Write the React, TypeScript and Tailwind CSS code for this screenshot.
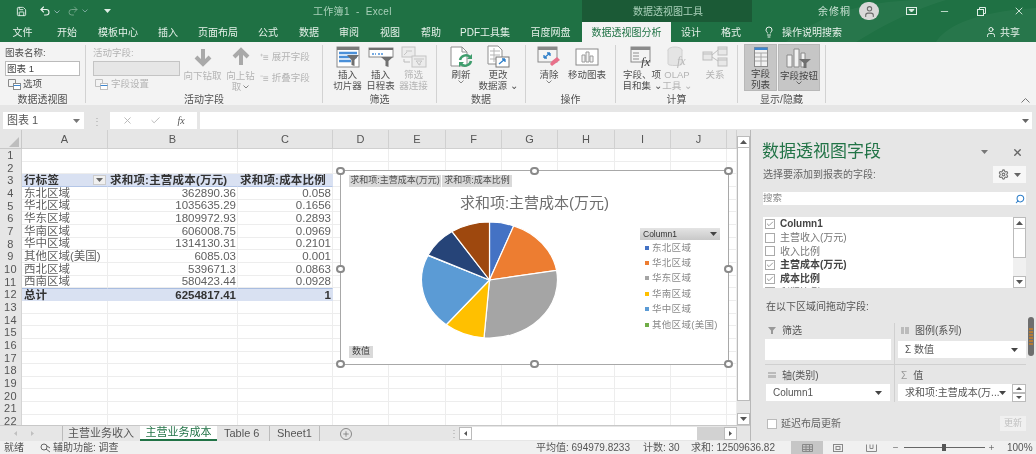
import React from "react";
import { Save, Undo2, Redo2, Lightbulb, User, X, Check, Search, Settings, Minus, Plus } from "lucide-react";

const Caret = ({ c = "#555" }: { c?: string }) => (
  <svg width="7" height="4" viewBox="0 0 7 4" className="shrink-0"><path d="M0 0h7L3.5 4z" fill={c} /></svg>
);
const Chev = ({ c = "#888" }: { c?: string }) => (
  <svg width="6" height="4" viewBox="0 0 6 4" className="shrink-0"><path d="M.5.5 3 3 5.500.5" stroke={c} fill="none" /></svg>
);

const tabs: [string, number][] = [
  ["文件", 45], ["开始", 44], ["模板中心", 58], ["插入", 42], ["页面布局", 58], ["公式", 42], ["数据", 40], ["审阅", 40], ["视图", 42], ["帮助", 40], ["PDF工具集", 68], ["百度网盘", 63],
];

const Big = ({ w, lines, icon, off, chev }: { w: string; lines: string[]; icon: React.ReactNode; off?: boolean; chev?: boolean }) => (
  <div className={`${w} flex flex-col items-center shrink-0 ${off ? "text-[#b4b4b4]" : "text-[#505050]"}`}>
    <div className="h-[24px] flex items-center justify-center">{icon}</div>
    {lines.map((l) => (
      <div key={l} className="text-[9.5px] leading-[11px] whitespace-nowrap flex items-center gap-[2px]">{l}</div>
    ))}
    {chev && <Chev />}
  </div>
);

const Group = ({ w, label, children }: { w: string; label: string; children: React.ReactNode }) => (
  <div className={`${w} shrink-0 h-[58px] mt-[3px] flex flex-col border-r border-[#d2d2d2]`}>
    <div className="flex-1 flex min-h-0">{children}</div>
    <div className="h-[9px] leading-[11px] text-[10px] text-center text-[#505050] whitespace-nowrap">{label}</div>
  </div>
);

const SlicerIcon = () => (
  <svg width="24" height="22" viewBox="0 0 24 22">
    <rect x="1" y="1" width="22" height="20" fill="#fff" stroke="#8a8a8a" />
    <rect x="1" y="1" width="22" height="3" fill="#7a7a7a" />
    <path d="M3 7h18M3 11h18M3 15h12" stroke="#4a90d9" strokeWidth="2.500" />
    <path d="M11 9h12l-4.500 5v6l-3-1v-5z" fill="#6f6f6f" />
  </svg>
);
const TimelineIcon = () => (
  <svg width="26" height="22" viewBox="0 0 26 22">
    <rect x="1" y="2" width="24" height="9" fill="#fff" stroke="#8a8a8a" />
    <rect x="1" y="2" width="24" height="2" fill="#6f6f6f" />
    <path d="M4 8h4M10 8h5" stroke="#4a90d9" strokeWidth="1.500" strokeDasharray="2 1" />
    <path d="M13 11h12l-4.500 4v6l-3-1v-5z" fill="#6f6f6f" />
  </svg>
);
const ConnIcon = () => (
  <svg width="26" height="22" viewBox="0 0 26 22" fill="none" stroke="#c4c4c4">
    <rect x="1" y="1" width="13" height="10" fill="#ececec" />
    <path d="M5 5h6M3 9l3-3" />
    <rect x="11" y="10" width="14" height="11" fill="#ececec" />
    <path d="M13 13h10M15 15h6l-2 2v2l-2-1v-1z" />
    <path d="M3 13v3h6" stroke="#bbb" />
  </svg>
);
const RefreshIcon = () => (
  <svg width="24" height="22" viewBox="0 0 24 22" fill="none">
    <path d="M2 1h11l5 5v14H2z" fill="#fff" stroke="#8f8f8f" />
    <path d="M13 1v5h5" stroke="#8f8f8f" />
    <path d="M11 14a6 6 0 0 1 10-3M22 15a6 6 0 0 1-10 3" stroke="#3f9d6d" strokeWidth="2.500" />
    <path d="M23 8v5h-5z M10 21v-5h5z" fill="#3f9d6d" />
  </svg>
);
const SourceIcon = () => (
  <svg width="24" height="24" viewBox="0 0 24 24" fill="none">
    <path d="M2 1h10l4 4v14H2z" fill="#fff" stroke="#8f8f8f" />
    <path d="M4 6h10M4 10h10M4 14h10M8 3v14" stroke="#b5b5b5" />
    <rect x="10" y="12" width="13" height="10" fill="#fff" stroke="#777" />
    <path d="M13 19l6-5M19 14h-3M19 14v3" stroke="#2f7fc9" strokeWidth="1.300" />
  </svg>
);
const ClearIcon = () => (
  <svg width="24" height="22" viewBox="0 0 24 22" fill="none">
    <rect x="1" y="1" width="19" height="15" fill="#f4f4f4" stroke="#8a8a8a" />
    <rect x="1" y="1" width="19" height="3" fill="#8a8a8a" />
    <path d="M7 12l6-5M13 7h-3M13 7v3M7 12h3M7 12V9" stroke="#2f7fc9" strokeWidth="1.300" />
    <path d="M15 15l5-4 3 3-8 6-2-2z" fill="#e8708a" />
  </svg>
);
const MoveIcon = () => (
  <svg width="24" height="20" viewBox="0 0 24 20" fill="none">
    <rect x="1" y="2" width="22" height="16" fill="#fff" stroke="#8a8a8a" />
    <path d="M7 8h3v7H7zM11 5h3v10h-3zM15 9h3v6h-3z" fill="#f4f4f4" stroke="#9a9a9a" />
  </svg>
);
const FxIcon = () => (
  <svg width="24" height="22" viewBox="0 0 24 22" fill="none">
    <rect x="1" y="1" width="19" height="15" fill="#f4f4f4" stroke="#8a8a8a" />
    <rect x="1" y="1" width="19" height="3" fill="#8a8a8a" />
    <path d="M3 7h6M3 10h6M3 13h6" stroke="#b0b0b0" strokeWidth="1.500" />
    <text x="11" y="20" fontSize="13" fontStyle="italic" fontFamily="Liberation Serif" fill="#444">fx</text>
  </svg>
);
const OlapIcon = () => (
  <svg width="20" height="22" viewBox="0 0 20 22" fill="none">
    <ellipse cx="8" cy="4" rx="7" ry="3" fill="#e4e4e4" stroke="#d0d0d0" />
    <path d="M1 4v14c0 2 14 2 14 0V4" fill="#e4e4e4" stroke="#d0d0d0" />
    <text x="10" y="19" fontSize="12" fontStyle="italic" fontFamily="Liberation Serif" fill="#b8b8b8">fx</text>
  </svg>
);
const RelIcon = () => (
  <svg width="26" height="22" viewBox="0 0 26 22" fill="none" stroke="#bdbdbd">
    <rect x="1" y="6" width="9" height="8" fill="#e8e8e8" />
    <rect x="16" y="1" width="9" height="8" fill="#e8e8e8" />
    <rect x="16" y="12" width="9" height="8" fill="#e8e8e8" />
    <path d="M10 9l6-5M10 11l6 4M1 8h9M16 3h9M16 14h9" />
  </svg>
);
const ListIcon = () => (
  <svg width="14" height="20" viewBox="0 0 14 20" fill="none">
    <rect x=".5" y=".5" width="13" height="19" fill="#f2f2f2" stroke="#8a8a8a" />
    <rect x=".5" y=".5" width="13" height="2.500" fill="#3e86cf" />
    <path d="M1 6h12M1 10h12M1 14h12M7 6v13" stroke="#a8a8a8" />
  </svg>
);
const FieldBtnIcon = () => (
  <svg width="26" height="20" viewBox="0 0 26 20" fill="none">
    <path d="M1 7h5v12H1zM8 1h5v18H8zM15 5h4v14h-4z" fill="#f2f2f2" stroke="#8a8a8a" />
    <path d="M13 11h12l-4.500 4v5h-3v-5z" fill="#6f6f6f" />
  </svg>
);

const PivotIcon = ({ off }: { off?: boolean }) => (
  <svg width="13" height="11" viewBox="0 0 13 11" fill="none" stroke={off ? "#c0c0c0" : "#8a8a8a"}>
    <path d="M.5.500h7v7h-7z" />
    <rect x="5.500" y="4.500" width="7" height="6" fill="#fff" />
    <path d="M5.500 6.500h7" stroke="#3e86cf" />
  </svg>
);

const Ribbon = () => (
  <div className="flex h-[63px] bg-[#f3f3f3] shrink-0 relative">
    <Group w="w-[86px]" label="数据透视图">
      <div className="pl-[5px] pt-[1px] flex flex-col w-full">
        <div className="h-[15px] text-[9.500px] leading-[14px] text-[#505050]">图表名称:</div>
        <div className="w-[75px] h-[15px] bg-white border border-[#bbb] text-[9.500px] leading-[13px] pl-[1px] text-[#444]">图表 1</div>
        <div className="flex items-center gap-[2px] pl-[3px] mt-[1px] h-[14px] text-[9.500px] text-[#505050]"><PivotIcon />选项</div>
      </div>
    </Group>
    <Group w="w-[237px]" label="活动字段">
      <div className="pl-[7px] pt-[1px] flex text-[#b4b4b4]">
        <div className="w-[87px] shrink-0 flex flex-col">
          <div className="h-[15px] text-[9.500px] leading-[14px]">活动字段:</div>
          <div className="h-[15px] bg-[#e6e6e6] border border-[#c4c4c4]" />
          <div className="flex items-center gap-[3px] pl-[2px] mt-[1px] h-[15px] text-[9.500px]"><PivotIcon off />字段设置</div>
        </div>
        <div className="w-[41px] ml-[2px] flex flex-col items-center">
          <svg width="20" height="20" viewBox="0 0 20 20" className="mt-[1px] mb-[3px]"><path d="M10 2v15M3 10l7 7 7-7" stroke="#a9a9a9" strokeWidth="4" fill="none" /></svg>
          <div className="text-[9.500px] leading-[11px] whitespace-nowrap">向下钻取</div>
        </div>
        <div className="w-[31px] ml-[2px] flex flex-col items-center">
          <svg width="20" height="20" viewBox="0 0 20 20" className="mt-[1px] mb-[3px]"><path d="M10 18V3M3 10l7-7 7 7" stroke="#a9a9a9" strokeWidth="4" fill="none" /></svg>
          <div className="text-[9.500px] leading-[11px] whitespace-nowrap">向上钻</div>
          <div className="text-[9.500px] leading-[11px] flex items-center gap-[2px]">取<Chev /></div>
        </div>
        <div className="ml-[4px] flex flex-col text-[9.500px] pt-[5px] gap-[9px] whitespace-nowrap">
          <div className="flex items-center gap-[3px] h-[12px]"><span className="text-[10px]">⁺≡</span>展开字段</div>
          <div className="flex items-center gap-[3px] h-[12px]"><span className="text-[10px]">⁻≡</span>折叠字段</div>
        </div>
      </div>
    </Group>
    <Group w="w-[114px]" label="筛选">
      <div className="pl-[8px] flex">
        <Big w="w-[33px]" lines={["插入", "切片器"]} icon={<SlicerIcon />} />
        <Big w="w-[33px]" lines={["插入", "日程表"]} icon={<TimelineIcon />} />
        <Big w="w-[33px]" off lines={["筛选", "器连接"]} icon={<ConnIcon />} />
      </div>
    </Group>
    <Group w="w-[89px]" label="数据">
      <div className="pl-[6px] flex">
        <Big w="w-[36px]" lines={["刷新"]} icon={<RefreshIcon />} chev />
        <Big w="w-[38px]" lines={["更改", "数据源 ⌄"]} icon={<SourceIcon />} />
      </div>
    </Group>
    <Group w="w-[90px]" label="操作">
      <div className="pl-[6px] flex">
        <Big w="w-[34px]" lines={["清除"]} icon={<ClearIcon />} chev />
        <Big w="w-[42px]" lines={["移动图表"]} icon={<MoveIcon />} />
      </div>
    </Group>
    <Group w="w-[122px]" label="计算">
      <div className="pl-[4px] flex">
        <Big w="w-[44px]" lines={["字段、项", "目和集 ⌄"]} icon={<FxIcon />} />
        <Big w="w-[26px]" off lines={["OLAP", "工具 ⌄"]} icon={<OlapIcon />} />
        <Big w="w-[50px]" off lines={["关系"]} icon={<RelIcon />} />
      </div>
    </Group>
    <Group w="w-[88px]" label="显示/隐藏">
      <div className="pl-[6px] flex gap-[1px] h-[47px] -mt-[1px]">
        <div className="w-[33px] bg-[#c6c6c6] border border-[#b8b8b8] flex flex-col items-center text-[#444]">
          <div className="h-[25px] flex items-center"><ListIcon /></div>
          <div className="text-[9.500px] leading-[11px]">字段</div>
          <div className="text-[9.500px] leading-[11px]">列表</div>
        </div>
        <div className="w-[42px] bg-[#c6c6c6] border border-[#b8b8b8] flex flex-col items-center text-[#444]">
          <div className="h-[25px] flex items-center"><FieldBtnIcon /></div>
          <div className="text-[9.500px] leading-[11px] whitespace-nowrap">字段按钮</div>
          <Chev c="#666" />
        </div>
      </div>
    </Group>
    <div className="ml-auto mr-[6px] self-end mb-[2px]">
      <svg width="9" height="5" viewBox="0 0 9 5"><path d="M.5 4.500l4-4 4 4" stroke="#777" fill="none" /></svg>
    </div>
  </div>
);

const TitleBar = () => (
  <div className="h-[22px] flex text-[#a9d0b9] text-[10px] shrink-0">
    <div className="w-[313px] flex items-center text-[#e8f2ec] pl-[16px]">
      <Save size={11} strokeWidth={2} />
      <Undo2 size={12} className="ml-[12px]" strokeWidth={2.200} />
      <span className="ml-[3px] mt-[1px] opacity-60"><Chev c="#cde" /></span>
      <Redo2 size={12} className="ml-[7px] opacity-40" />
      <span className="ml-[3px] opacity-50"><Chev c="#cde" /></span>
      <span className="ml-[16px]"><Caret c="#dfeee6" /></span>
    </div>
    <div className="w-[269px] flex items-center tracking-[0.3px] whitespace-pre">工作簿1  -  Excel</div>
    <div className="w-[170px] bg-[#1b5a36] flex items-center pl-[51px] whitespace-nowrap">数据透视图工具</div>
    <div className="flex-1 flex items-center text-[#c8e0d2]">
      <span className="ml-[66px] tracking-[1px] whitespace-nowrap">余修桐</span>
      <span className="ml-[8px] w-[20px] h-[18px] rounded-full bg-[#d8d8d8] flex items-center justify-center"><User size={13} color="#666" /></span>
      <svg width="11" height="8" viewBox="0 0 11 8" className="ml-[27px]" fill="none" stroke="#dfeee6"><rect x=".5" y=".5" width="10" height="7" /><path d="M3 2.500h5L5.500 5z" fill="#dfeee6" /></svg>
      <Minus size={11} className="ml-[22px]" />
      <svg width="9" height="9" viewBox="0 0 9 9" className="ml-[27px]" fill="none" stroke="#dfeee6"><rect x=".5" y="2.500" width="6" height="6" /><path d="M2.500 2.500v-2h6v6h-2" /></svg>
      <X size={12} className="ml-[27px]" />
    </div>
  </div>
);

const TabRow = () => (
  <div className="h-[20px] flex text-[10px] text-[#e6f1ea] shrink-0">
    {tabs.map(([t, w]) => (
      <div key={t} style={{ width: w }} className="flex items-center justify-center whitespace-nowrap">{t}</div>
    ))}
    <div className="w-[89px] bg-[#f3f3f3] text-[#217346] flex items-center justify-center whitespace-nowrap">数据透视图分析</div>
    <div className="w-[40px] flex items-center justify-center">设计</div>
    <div className="w-[40px] flex items-center justify-center">格式</div>
    <Lightbulb size={12} className="ml-[12px] self-center" />
    <div className="ml-[7px] flex items-center whitespace-nowrap">操作说明搜索</div>
    <div className="ml-auto mr-[16px] flex items-center gap-[3px]"><User size={12} />共享</div>
  </div>
);

const FormulaBar = () => (
  <div className="h-[25px] bg-[#e6e6e6] flex pt-[7px] shrink-0 text-[#555]">
    <div className="ml-[3px] w-[81px] h-[17px] bg-white flex items-center px-[4px] text-[11px]">
      <span className="flex-1">图表 1</span><Caret c="#777" />
    </div>
    <div className="w-[26px] flex items-center justify-center text-[#aaa] text-[10px]">⋮</div>
    <div className="w-[87px] h-[17px] bg-white flex items-center justify-around px-[4px]">
      <X size={11} color="#b5b5b5" /><Check size={11} color="#b5b5b5" />
      <span className="font-['Liberation_Serif',serif] italic text-[10px] text-[#555]">fx</span>
    </div>
    <div className="ml-[3px] w-[832px] h-[17px] bg-white flex items-center justify-end pr-[3px]"><Caret c="#666" /></div>
  </div>
);

const cols = ["A", "B", "C", "D", "E", "F", "G", "H", "I", "J", ""];
const rows: [string, string, string][] = [
  ["东北区域", "362890.36", "0.058"],
  ["华北区域", "1035635.29", "0.1656"],
  ["华东区域", "1809972.93", "0.2893"],
  ["华南区域", "606008.75", "0.0969"],
  ["华中区域", "1314130.31", "0.2101"],
  ["其他区域(美国)", "6085.03", "0.001"],
  ["西北区域", "539671.3", "0.0863"],
  ["西南区域", "580423.44", "0.0928"],
];

const cellCls = "border-r border-b border-[#ededed] pl-[2px] pr-[1px] overflow-visible whitespace-nowrap leading-[12px] text-[11.500px] flex items-center";

const SheetGrid = () => {
  const out: React.ReactNode[] = [];
  for (let r = 1; r <= 22; r++) {
    out.push(
      <div key={`h${r}`} className="bg-[#e6e6e6] border-r border-[#d4d4d4] text-[11px] text-[#555] flex items-center justify-center tracking-[0.5px]">{r}</div>
    );
    for (let c = 0; c < 11; c++) {
      let content: React.ReactNode = null;
      let extra = "";
      if (r === 3 && c < 3) {
        extra = "bg-[#d9e1f2] font-bold text-[#333] border-b-[#b4c6e7] tracking-[0.2px] border-r-transparent";
        if (c === 0) {
          content = (
            <>
              <span className="flex-1">行标签</span>
              <span className="w-[13px] h-[10px] bg-[#f0f0f0] border border-[#ccc] flex items-center justify-center"><Caret c="#666" /></span>
            </>
          );
        } else {
          content = c === 1 ? "求和项:主营成本(万元)" : "求和项:成本比例";
        }
      } else if (r === 12 && c < 3) {
        extra = `bg-[#d9e1f2] font-bold text-[#333] border-t border-t-[#a9bde0] border-r-transparent border-b-[#d9e1f2] ${c > 0 ? "justify-end" : ""}`;
        content = ["总计", "6254817.41", "1"][c];
      } else if (r >= 4 && r <= 11 && c < 3) {
        extra = `text-[#606060] ${c > 0 ? "justify-end" : ""}`;
        content = rows[r - 4][c];
      }
      out.push(<div key={`${r}-${c}`} className={`${cellCls} ${extra}`}>{content}</div>);
    }
  }
  return (
    <div className="grid grid-cols-[22px_86px_130px_95px_56px_57px_56px_56px_57px_56px_56px_10px] grid-rows-[19px_repeat(22,12.67px)] h-[295px] overflow-hidden">
      <div className="bg-[#e6e6e6] border-b border-r border-[#c8c8c8] flex items-end justify-end pr-[2px] pb-[1px]">
        <svg width="10" height="10" viewBox="0 0 10 10"><path d="M10 0v10H0z" fill="#bdbdbd" /></svg>
      </div>
      {cols.map((c, i) => (
        <div key={i} className="bg-[#e6e6e6] border-r border-b border-[#d0d0d0] text-[11px] text-[#555] flex items-center justify-center">{c}</div>
      ))}
      {out}
    </div>
  );
};

const slices: [number, string][] = [
  [0.058, "#4472c4"], [0.1656, "#ed7d31"], [0.2893, "#a5a5a5"], [0.0969, "#ffc000"], [0.2101, "#5b9bd5"], [0.001, "#70ad47"], [0.0863, "#264478"], [0.0928, "#9e480e"],
];
const Pie = () => {
  const rx = 68, ry = 58, cx = 68.500, cy = 58;
  let a = -Math.PI / 2;
  return (
    <svg width="137" height="116" viewBox="0 0 137 116" className="shrink-0">
      {slices.map(([f, col]) => {
        const b = a + f * Math.PI * 2;
        const d = `M${cx} ${cy}L${cx + rx * Math.cos(a)} ${cy + ry * Math.sin(a)}A${rx} ${ry} 0 ${f > 0.5 ? 1 : 0} 1 ${cx + rx * Math.cos(b)} ${cy + ry * Math.sin(b)}Z`;
        a = b;
        return <path key={col} d={d} fill={col} stroke="#fff" strokeWidth="1.200" />;
      })}
    </svg>
  );
};

const legend: [string, string][] = [
  ["东北区域", "bg-[#4472c4]"], ["华北区域", "bg-[#ed7d31]"], ["华东区域", "bg-[#a5a5a5]"], ["华南区域", "bg-[#ffc000]"], ["华中区域", "bg-[#5b9bd5]"], ["其他区域(美国)", "bg-[#70ad47]"],
];

const Handle = ({ pos }: { pos: string }) => (
  <span className={`absolute ${pos} w-[9px] h-[8px] rounded-full bg-white border-2 border-[#8a8a8a]`} />
);

const Chart = () => (
  <div className="absolute left-[340px] top-[40px] w-[389px] h-[195px] bg-white border border-[#a8a8a8] flex flex-col">
    <div className="flex pl-[8px] pt-[4px] text-[9px] text-[#505050] gap-[1px]">
      <div className="w-[92px] h-[12px] bg-[#d9d9d9] flex items-center justify-center whitespace-nowrap">求和项:主营成本(万元)</div>
      <div className="w-[70px] h-[12px] bg-[#d9d9d9] flex items-center justify-center whitespace-nowrap">求和项:成本比例</div>
    </div>
    <div className="mt-[7px] h-[18px] text-[15px] leading-[18px] text-[#6e6e6e] text-center whitespace-nowrap">求和项:主营成本(万元)</div>
    <div className="flex mt-[10px] ml-[80px]">
      <Pie />
      <div className="ml-[82px] mt-[6px] w-[80px]">
        <div className="h-[12px] bg-gradient-to-b from-[#e4e4e4] to-[#c8c8c8] text-[8.500px] text-[#333] flex items-center justify-between px-[3px]">Column1<Caret c="#444" /></div>
        {legend.map(([t, c]) => (
          <div key={t} className="h-[15.400px] flex items-center text-[9.500px] text-[#8a8a8a] tracking-[0.3px] pl-[5px] whitespace-nowrap">
            <span className={`w-[4px] h-[4px] ${c} mr-[3px] shrink-0`} />{t}
          </div>
        ))}
      </div>
    </div>
    <div className="ml-[8px] mt-[8px] w-[24px] h-[12px] bg-[#d9d9d9] text-[9px] text-[#444] flex items-center justify-center">数值</div>
    <Handle pos="-left-[5px] -top-[4px]" />
    <Handle pos="left-[189px] -top-[4px]" />
    <Handle pos="-right-[5px] -top-[4px]" />
    <Handle pos="-left-[5px] top-[94px]" />
    <Handle pos="-right-[5px] top-[94px]" />
    <Handle pos="-left-[5px] -bottom-[4px]" />
    <Handle pos="left-[189px] -bottom-[4px]" />
    <Handle pos="-right-[5px] -bottom-[4px]" />
  </div>
);

const ScrollBtn = ({ d }: { d: string }) => (
  <div className="h-[12px] w-[13px] bg-white border border-[#bbb] flex items-center justify-center shrink-0">
    <svg width="7" height="4" viewBox="0 0 7 4"><path d={d} fill="#555" /></svg>
  </div>
);

const VScroll = () => (
  <div className="w-[13px] h-[295px] bg-[#e6e6e6] flex flex-col pt-[6px] shrink-0">
    <ScrollBtn d="M0 4h7L3.500 0z" />
    <div className="h-[253px] bg-white border-x border-b border-[#bbb]" />
    <div className="h-[12px]" />
    <ScrollBtn d="M0 0h7L3.500 4z" />
  </div>
);

const TabsBar = () => (
  <div className="h-[16px] bg-[#e6e6e6] flex items-stretch text-[11px] text-[#555] border-t border-[#c8c8c8] shrink-0">
    <div className="w-[62px] flex items-center gap-[14px] pl-[14px] text-[#bbb]">
      <svg width="3" height="5" viewBox="0 0 3 5"><path d="M3 0v5L0 2.500z" fill="#c0c0c0" /></svg>
      <svg width="3" height="5" viewBox="0 0 3 5"><path d="M0 0v5l3-2.500z" fill="#c0c0c0" /></svg>
    </div>
    <div className="w-[78px] border-l border-[#bbb] flex items-center pl-[5px] whitespace-nowrap">主营业务收入</div>
    <div className="w-[77px] bg-white border-b-2 border-[#217346] text-[#217346] flex items-center justify-center whitespace-nowrap">主营业务成本</div>
    <div className="w-[53px] border-r border-[#bbb] flex items-center pl-[7px] whitespace-nowrap">Table 6</div>
    <div className="w-[50px] border-r border-[#bbb] flex items-center pl-[7px] whitespace-nowrap">Sheet1</div>
    <div className="w-[129px] flex items-center pl-[20px]">
      <span className="w-[12px] h-[12px] rounded-full border border-[#888] flex items-center justify-center"><Plus size={8} color="#666" /></span>
    </div>
    <div className="w-[10px] text-[#aaa] flex items-center text-[10px]">⋮</div>
    <div className="w-[13px] h-[13px] mt-[1px] bg-white border border-[#bbb] flex items-center justify-center">
      <svg width="3" height="5" viewBox="0 0 3 5"><path d="M3 0v5L0 2.500z" fill="#555" /></svg>
    </div>
    <div className="w-[225px] h-[13px] mt-[1px] bg-white" />
    <div className="w-[27px] h-[13px] mt-[1px] bg-[#d2d2d2]" />
    <div className="w-[13px] h-[13px] mt-[1px] bg-white border border-[#bbb] flex items-center justify-center">
      <svg width="3" height="5" viewBox="0 0 3 5"><path d="M0 0v5l3-2.500z" fill="#555" /></svg>
    </div>
  </div>
);

const fields: [string, boolean][] = [
  ["Column1", true], ["主营收入(万元)", false], ["收入比例", false], ["主营成本(万元)", true], ["成本比例", true], ["利润比例", false],
];

const Drop = ({ w, text, extra }: { w: string; text: React.ReactNode; extra?: string }) => (
  <div className={`${w} h-[17px] bg-white flex items-center justify-between pl-[7px] pr-[8px] text-[10px] text-[#555] whitespace-nowrap ${extra ?? ""}`}>
    <span>{text}</span><Caret c="#444" />
  </div>
);

const Pane = () => (
  <div className="w-[286px] bg-[#e6e6e6] border-l border-[#b8b8b8] pl-[11px] flex flex-col relative shrink-0">
    <div className="mt-[12px] h-[20px] flex items-center">
      <div className="text-[17px] leading-[20px] text-[#217346] whitespace-nowrap">数据透视图字段</div>
      <span className="ml-[100px]"><Caret c="#777" /></span>
      <X size={11} strokeWidth={3} color="#666" className="ml-[24px]" />
    </div>
    <div className="mt-[4px] h-[17px] flex items-center justify-between w-[264px] pl-[1px] text-[10px] text-[#666]">
      <span className="whitespace-nowrap">选择要添加到报表的字段:</span>
      <div className="w-[33px] h-[17px] bg-[#f7f7f7] flex items-center justify-center gap-[5px]"><Settings size={11} color="#777" strokeWidth={2.500} /><Caret c="#666" /></div>
    </div>
    <div className="mt-[9px] ml-[1px] w-[263px] h-[13px] bg-white flex items-center justify-between pr-[1px] text-[9.500px] text-[#888]">
      搜索<Search size={10} color="#2f7fc9" strokeWidth={2.500} className="-scale-x-100" />
    </div>
    <div className="mt-[12px] ml-[1px] w-[263px] h-[71px] bg-white flex overflow-hidden">
      <div className="flex-1">
        {fields.map(([t, on]) => (
          <div key={t} className={`h-[13.700px] flex items-center pl-[2px] text-[10px] whitespace-nowrap ${on ? "font-bold text-[#444]" : "text-[#777]"}`}>
            <span className="w-[10px] h-[10px] border border-[#aaa] bg-white flex items-center justify-center mr-[5px]">{on && <Check size={8} color="#666" />}</span>{t}
          </div>
        ))}
      </div>
      <div className="w-[13px] bg-[#f0f0f0] flex flex-col">
        <ScrollBtn d="M0 4h7L3.500 0z" />
        <div className="h-[29px] bg-white border-x border-b border-[#bbb]" />
        <div className="flex-1" />
        <ScrollBtn d="M0 0h7L3.500 4z" />
      </div>
    </div>
    <div className="mt-[13px] ml-[4px] h-[12px] leading-[12px] text-[10px] text-[#555] whitespace-nowrap">在以下区域间拖动字段:</div>
    <div className="mt-[10px] ml-[3px] w-[261px] grid grid-cols-[130px_131px] text-[10px] text-[#555]">
      <div className="h-[42px] border-r border-b border-[#d0d0d0] pr-[3px]">
        <div className="h-[14px] flex items-center gap-[6px] pl-[3px]"><svg width="8" height="7" viewBox="0 0 8 7"><path d="M0 0h8L5 3.500V7H3V3.500z" fill="#999" /></svg>筛选</div>
        <div className="mt-[2px] h-[21px] w-[126px] bg-white" />
      </div>
      <div className="h-[42px] border-b border-[#d0d0d0] pl-[3px]">
        <div className="h-[14px] flex items-center gap-[6px] pl-[3px]"><svg width="8" height="7" viewBox="0 0 8 7"><path d="M0 0h3v7H0zM4 0h4v7H4z" fill="#bbb" /></svg>图例(系列)</div>
        <Drop w="w-[128px] mt-[4px]" text="Σ 数值" />
      </div>
      <div className="h-[37px] border-r border-[#d0d0d0] pr-[3px] pt-[3px]">
        <div className="h-[14px] flex items-center gap-[6px] pl-[3px]"><svg width="8" height="6" viewBox="0 0 8 6"><path d="M0 0h8v2H0zM0 3h8v3H0z" fill="#bbb" /></svg>轴(类别)</div>
        <Drop w="w-[124px] mt-[2px]" text="Column1" extra="ml-[1px]" />
      </div>
      <div className="h-[37px] pl-[3px] pt-[3px]">
        <div className="h-[14px] flex items-center gap-[6px] pl-[3px]"><span className="text-[#999]">Σ</span>值</div>
        <div className="flex mt-[2px]">
          <Drop w="w-[114px]" text="求和项:主营成本(万... " />
          <div className="flex flex-col w-[14px]">
            <div className="h-[9px] bg-white border border-[#bbb] flex items-center justify-center"><svg width="6" height="3" viewBox="0 0 6 3"><path d="M0 3h6L3 0z" fill="#555" /></svg></div>
            <div className="h-[9px] bg-white border border-[#bbb] flex items-center justify-center"><svg width="6" height="3" viewBox="0 0 6 3"><path d="M0 0h6L3 3z" fill="#555" /></svg></div>
          </div>
        </div>
      </div>
    </div>
    <div className="mt-[14px] ml-[5px] w-[259px] h-[15px] flex items-center justify-between text-[10px] text-[#666]">
      <span className="flex items-center gap-[4px] whitespace-nowrap"><span className="w-[10px] h-[10px] bg-white border border-[#bbb]" />延迟布局更新</span>
      <span className="w-[26px] h-[15px] bg-[#f0f0f0] flex items-center justify-center text-[9px] text-[#c0c0c0]">更新</span>
    </div>
    <div className="absolute left-[277px] top-[187px] w-[6px] h-[39px] rounded-[3px] bg-[#6e6e6e] flex flex-col justify-center gap-[1px] py-[8px]">
      {[0, 1, 2, 3, 4, 5].map((i) => <div key={i} className="h-[2px] bg-[#b27a36] mx-[1px]" />)}
    </div>
  </div>
);

const StatusBar = () => (
  <div className="h-[13px] bg-[#f0f0f0] flex items-center text-[10px] text-[#555] shrink-0 whitespace-nowrap">
    <span className="ml-[4px] w-[36px]">就绪</span>
    <svg width="11" height="10" viewBox="0 0 11 10" fill="none" stroke="#666"><circle cx="4" cy="4" r="3" /><path d="M6 6l4 3M7 3l3 2" /></svg>
    <span className="ml-[2px] w-[483px]">辅助功能: 调查</span>
    <span className="w-[107px]">平均值: 694979.8233</span>
    <span className="w-[48px]">计数: 30</span>
    <span className="w-[100px]">求和: 12509636.82</span>
    <div className="w-[32px] h-[13px] bg-[#c6c6c6] flex items-center justify-center">
      <svg width="11" height="8" viewBox="0 0 11 8" fill="none" stroke="#888"><path d="M.5.500h10v7H.5zM.5 3h10M.5 5.500h10M4 .5v7M7.500.5v7" /></svg>
    </div>
    <svg width="10" height="8" viewBox="0 0 10 8" fill="none" stroke="#888" className="ml-[10px]"><rect x=".5" y=".5" width="9" height="7" /><rect x="3" y="2.500" width="4" height="3" /></svg>
    <svg width="11" height="8" viewBox="0 0 11 8" fill="none" stroke="#888" className="ml-[23px]"><path d="M.5.500v7h10v-7M4 .5v4h3v-4" /></svg>
    <Minus size={7} color="#555" className="ml-[15px]" />
    <div className="ml-[5px] w-[81px] h-[1px] bg-[#666] relative">
      <span className="absolute left-[38px] -top-[3px] w-[4px] h-[7px] bg-[#555]" />
    </div>
    <Plus size={7} color="#555" className="ml-[3px]" />
    <span className="ml-[12px]">100%</span>
  </div>
);

export default function App() {
  return (
    <div className="w-[1036px] h-[454px] overflow-hidden flex flex-col bg-white font-['Liberation_Sans','Noto_Sans_CJK_SC',sans-serif] blur-[0.45px]">
      <div className="bg-[#1f7144] shrink-0 flex flex-col relative">
        <TitleBar />
        <TabRow />
        <svg width="250" height="42" viewBox="0 0 250 42" className="absolute right-0 top-0 pointer-events-none" fill="#fff" opacity="0.035">
          <path d="M0 42C40 10 90 0 140 0h20C120 12 90 30 70 42z" />
          <path d="M150 42c10-16 40-30 100-34v34z" />
        </svg>
      </div>
      <Ribbon />
      <FormulaBar />
      <div className="flex flex-1 min-h-0">
        <div className="w-[750px] flex flex-col shrink-0">
          <div className="flex h-[295px] relative">
            <div className="w-[737px] shrink-0"><SheetGrid /></div>
            <VScroll />
            <Chart />
          </div>
          <TabsBar />
        </div>
        <Pane />
      </div>
      <StatusBar />
    </div>
  );
}
